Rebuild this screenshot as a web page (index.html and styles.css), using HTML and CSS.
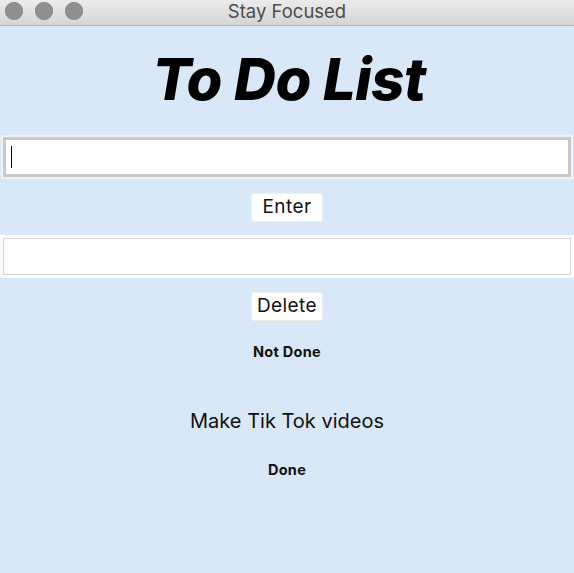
FILE: index.html
```html
<!DOCTYPE html>
<html>
<head>
<meta charset="utf-8">
<title>Stay Focused</title>
<link rel="stylesheet" href="styles.css">
</head>
<body>
<div class="window">
  <div class="titlebar">
    <div class="lights">
      <span class="light"></span><span class="light"></span><span class="light"></span>
    </div>
    <div class="wtitle">Stay Focused</div>
  </div>
  <div class="content">
    <h1 class="heading">To Do List</h1>
    <div class="entry entry-focus"><span class="caret"></span></div>
    <div class="btn">Enter</div>
    <div class="entry entry-plain"></div>
    <div class="btn btn-del">Delete</div>
    <div class="label label-notdone">Not Done</div>
    <div class="task">Make Tik Tok videos</div>
    <div class="label label-done">Done</div>
  </div>
</div>
</body>
</html>
```
FILE: styles.css
```css
html, body {
  margin: 0;
  padding: 0;
}
body {
  width: 574px;
  height: 573px;
  overflow: hidden;
  background: #d8e8f6;
  font-family: Inter, "Liberation Sans", Arial, sans-serif;
}
.window {
  display: flex;
  flex-direction: column;
  height: 573px;
}
.titlebar {
  height: 25px;
  flex: none;
  position: relative;
  background: linear-gradient(#ebebeb, #d5d5d5);
  border-bottom: 1px solid #b3b3b3;
  display: flex;
  align-items: center;
  justify-content: center;
}
.lights {
  position: absolute;
  left: 5px;
  top: 2px;
  display: flex;
  gap: 12px;
}
.light {
  width: 18px;
  height: 18px;
  border-radius: 50%;
  background: #8f8f8f;
  box-shadow: inset 0 0 0 0.5px #858585;
}
.wtitle {
  font-family: Inter, "Liberation Sans", Arial, sans-serif;
  font-size: 18.5px;
  color: #4c4c4c;
  margin-left: 0;
  margin-top: -3px;
}
.content {
  flex: 1;
  display: flex;
  flex-direction: column;
  align-items: center;
  background: #d8e8f6;
}
.heading {
  margin: 21px 0 0 0;
  height: 90px;
  font-family: Inter, "Liberation Sans", sans-serif;
  font-weight: 800;
  font-style: italic;
  font-size: 58px;
  line-height: 64px;
  color: #000;
  letter-spacing: -0.5px;
  margin-left: 4px;
}
.entry {
  box-sizing: border-box;
  background: #fff;
  display: flex;
  align-items: center;
}
.entry-focus {
  width: 568px;
  height: 40px;
  border: 3px solid #c9c9c9;
  outline: 2px solid #edf3f9;
}
.caret {
  width: 1px;
  height: 22px;
  background: #000;
  margin-left: 5px;
}
.entry-plain {
  width: 568px;
  height: 37px;
  border: 1px solid #d6d6d6;
  outline: 3px solid #fbfcfd;
}
.btn {
  box-sizing: border-box;
  width: 72px;
  height: 29px;
  margin-top: 16px;
  margin-bottom: 16px;
  background: #fff;
  border: 1px solid #eef0f2;
  border-radius: 3px;
  font-family: Inter, "Liberation Sans", Arial, sans-serif;
  font-size: 19px;
  letter-spacing: 0.4px;
  line-height: 26px;
  text-align: center;
  color: #111;
}
.btn-del {
  margin-top: 17px;
  margin-bottom: 0;
}
.label {
  font-family: Inter, "Liberation Sans", Arial, sans-serif;
  font-weight: bold;
  font-size: 14.5px;
  letter-spacing: 0.3px;
  color: #111;
}
.label-notdone {
  margin-top: 22px;
}
.task {
  margin-top: 49px;
  font-family: Inter, "Liberation Sans", Arial, sans-serif;
  font-size: 20px;
  color: #111;
}
.label-done {
  margin-top: 28px;
}
```
